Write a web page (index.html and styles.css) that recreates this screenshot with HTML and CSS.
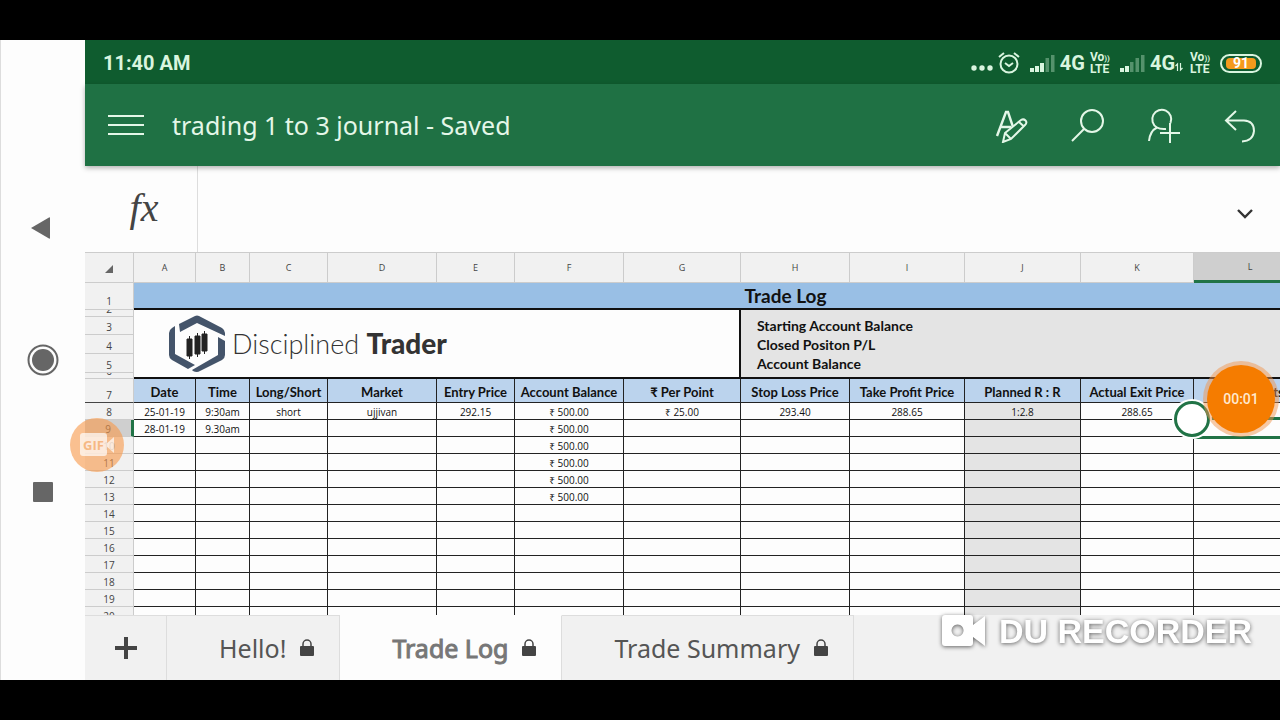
FILE: index.html
```html
<!DOCTYPE html>
<html lang="en">
<head>
  <meta charset="UTF-8" />
  <meta name="viewport" content="width=device-width, initial-scale=1.0"/>
  <title>trading 1 to 3 journal</title>
  <link rel="stylesheet" href="styles.css">
</head>
<body>

  <div class="screen">
    <nav class="android-nav">
      <button aria-label="Back"><svg width="32" height="32" viewBox="0 0 32 32"><path d="M4 16L22 5.500Q23 5 23 6V26Q23 27 22 26.500Z" fill="#666"/></svg></button>
      <button aria-label="Home"><svg width="32" height="32" viewBox="0 0 32 32"><circle cx="16" cy="16" r="14.500" fill="none" stroke="#666" stroke-width="2"/><circle cx="16" cy="16" r="11" fill="#666"/></svg></button>
      <button aria-label="Recent apps"><svg width="32" height="32" viewBox="0 0 32 32"><rect x="6" y="6" width="20" height="20" rx="1" fill="#666"/></svg></button>
    </nav>

    <main class="app">
      <div class="status-bar">
        <span class="clock">11:40 AM</span>
        <div class="status-icons">
          <svg width="22" height="28" viewBox="0 0 22 28" fill="#d9f5df"><circle cx="3" cy="19" r="2.700"/><circle cx="11" cy="19" r="2.700"/><circle cx="19" cy="19" r="2.700"/></svg>
          <svg class="alarm" width="22" height="24" viewBox="0 0 22 24" fill="none" stroke="#d9f5df" stroke-width="2"><circle cx="11" cy="13" r="8.500"/><path d="M7 12l4 3 4-3M1 6l5-4M21 6l-5-4"/></svg>
          <svg class="signal" width="25" height="20" viewBox="0 0 25 20" fill="#d9f5df"><path d="M0 15h4v4H0zM5 13h4v6H5zM10 10h4v9h-4z"/><path d="M15.500 5h3.500v14h-3.500zM21 2h3.500v17H21z" opacity=".35"/></svg>
          <span class="net">4G</span>
          <span class="volte"><span>Vo<small>))</small></span><span>LTE</span></span>
          <svg class="signal" width="25" height="20" viewBox="0 0 25 20" fill="#d9f5df"><path d="M0 15h4v4H0zM5 13h4v6H5z"/><path d="M10 9h3.500v10H10zM15.500 5h3.500v14h-3.500zM21 2h3.500v17H21z" opacity=".35"/></svg>
          <span class="net">4G</span>
          <svg class="updown" width="8" height="10" viewBox="0 0 8 10" fill="none" stroke="#d9f5df" stroke-width="1.200"><path d="M2.500 9V2L.5 4M5.500 1v7l2-2"/></svg>
          <span class="volte"><span>Vo<small>))</small></span><span>LTE</span></span>
          <span class="battery"><span>91</span></span>
        </div>
      </div>

      <header class="app-bar">
        <button aria-label="Menu"><svg width="36" height="24" viewBox="0 0 36 24" stroke="#e4f7e8" stroke-width="2"><path d="M0 3h36M0 12h36M0 21h36"/></svg></button>
        <h1>trading 1 to 3 journal - Saved</h1>
        <div class="actions">
          <button aria-label="Format"><svg width="36" height="36" viewBox="0 0 36 36" fill="none" stroke="#e4f7e8" stroke-width="2"><path d="M3 29L12 5h2L19 20M7 20h10" stroke-width="2.400"/><path d="M9 35l2-9L27 13q2.500-1.500 4.500 0.500t-.5 4.500L17 32zM11 26l6 6M25 15l5 4.500"/></svg></button>
          <button aria-label="Search"><svg width="36" height="36" viewBox="0 0 36 36" fill="none" stroke="#e4f7e8" stroke-width="2"><circle cx="22" cy="14" r="11"/><path d="M14 22L2 34"/></svg></button>
          <button aria-label="Share"><svg width="36" height="36" viewBox="0 0 36 36" fill="none" stroke="#e4f7e8" stroke-width="2"><path d="M24.500 16A9.500 9.500 0 1 0 11 20.500Q14 22.500 20 22M11 20.500Q4 24 3 34"/><path d="M24 16v20M14 26h20"/></svg></button>
          <button aria-label="Undo"><svg width="36" height="36" viewBox="0 0 36 36" fill="none" stroke="#e4f7e8" stroke-width="2"><path d="M14 4L4 13.500 14 23M4 13.500H22Q32 14 32 24 31 34 20 34.500"/></svg></button>
        </div>
      </header>

      <div class="formula-bar">
        <label class="fx" for="formula">fx</label>
        <input type="text" id="formula" class="formula">
        <button class="expand" aria-label="Expand"><svg width="20" height="12" viewBox="0 0 20 12" fill="none" stroke="#333" stroke-width="2.400"><path d="M3 2l7 7 7-7"/></svg></button>
      </div>

      <div class="sheet">
        <table>
          <colgroup>
            <col class="w-head"><col class="w-a"><col class="w-b"><col class="w-c"><col class="w-d"><col class="w-e"><col class="w-f">
            <col class="w-g"><col class="w-h"><col class="w-i"><col class="w-j"><col class="w-k"><col class="w-l"><col class="w-m">
          </colgroup>
          <thead>
            <tr class="letters">
              <th><svg width="8" height="8" viewBox="0 0 8 8"><path d="M8 0v8H0z" fill="#666"/></svg></th>
              <th>A</th><th>B</th><th>C</th><th>D</th><th>E</th><th>F</th><th>G</th><th>H</th><th>I</th><th>J</th><th>K</th><th class="active">L</th><th>M</th>
            </tr>
          </thead>
          <tbody id="rows">
            <tr class="title-row"><th>1</th><td colspan="13">Trade Log</td></tr>
            <tr class="row-2">
              <th><div class="clip">2</div></th>
              <td colspan="7" rowspan="5" class="logo-cell">
                <div class="logo">
                  <svg width="58" height="58" viewBox="0 0 58 58">
                    <g fill="#44546a">
                      <path d="M11 9L27 1Q29 0 31 1L54 13Q57 15 57 18V21L29 8 12 17Z"/>
                      <path d="M7 11V39L27 50 20 54 4 45Q1 43 1 40V18Q1 15 4 13Z"/>
                      <path d="M50 22L57 26V40Q57 43 54 45L32 56Q29 58 25 56L24 55 50 40Z"/>
                    </g>
                    <g fill="#222" stroke="#222"><path d="M19 24h5v17h-5zM27 21h5v18h-5zM34 19h5v17h-5z"/><path d="M21.500 21v23M29.500 18v24M36.500 16v23"/></g>
                  </svg>
                  <span>Disciplined <b>Trader</b></span>
                </div>
              </td>
              <td colspan="6" class="sum"></td>
            </tr>
            <tr class="row-3"><th>3</th><td colspan="6" class="sum">Starting Account Balance</td></tr>
            <tr class="row-4"><th>4</th><td colspan="6" class="sum">Closed Positon P/L</td></tr>
            <tr class="row-4"><th>5</th><td colspan="6" class="sum">Account Balance</td></tr>
            <tr class="row-6"><th><div class="clip">6</div></th><td colspan="6" class="sum"></td></tr>
            <tr class="heads">
              <th>7</th>
              <td>Date</td><td>Time</td><td>Long/Short</td><td>Market</td><td>Entry Price</td><td>Account Balance</td><td>₹ Per Point</td><td>Stop Loss Price</td><td>Take Profit Price</td><td>Planned R : R</td><td>Actual Exit Price</td><td>Total Points</td><td></td>
            </tr>
          </tbody>
        </table>
      </div>

      <footer class="tabs">
        <button class="add" aria-label="Add sheet"><svg width="22" height="22" viewBox="0 0 22 22"><path d="M9 0h4v9h9v4h-9v9H9v-9H0V9h9z" fill="#444"/></svg></button>
        <button class="tab">Hello! <svg width="14" height="18" viewBox="0 0 14 18"><path d="M3 8V5a4 4 0 0 1 8 0v3" fill="none" stroke="#444" stroke-width="1.500"/><rect y="7" width="14" height="10" rx="1" fill="#444"/></svg></button>
        <button class="tab current">Trade Log <svg width="14" height="18" viewBox="0 0 14 18"><path d="M3 8V5a4 4 0 0 1 8 0v3" fill="none" stroke="#444" stroke-width="1.500"/><rect y="7" width="14" height="10" rx="1" fill="#444"/></svg></button>
        <button class="tab">Trade Summary <svg width="14" height="18" viewBox="0 0 14 18"><path d="M3 8V5a4 4 0 0 1 8 0v3" fill="none" stroke="#444" stroke-width="1.500"/><rect y="7" width="14" height="10" rx="1" fill="#444"/></svg></button>
      </footer>
    </main>

    <!-- floating recorder widgets -->
    <button class="gif-bubble"><svg width="34" height="24" viewBox="0 0 34 24" fill="#fff"><rect width="27" height="23" rx="3"/><path d="M25 12l9-8v16z"/></svg><span>GIF</span></button>
    <button class="rec-bubble">00:01</button>
    <div class="watermark">
      <svg width="46" height="36" viewBox="0 0 46 36"><path fill-rule="evenodd" fill="#fff" d="M4 2H29Q32 2 32 5V12L44 3V33L32 24V30Q32 33 29 33H4Q1 33 1 30V5Q1 2 4 2ZM16.500 11.500a6 6 0 1 0 .1 0Z"/></svg>
      <span>DU RECORDER</span>
    </div>
  </div>

  <script>
    const rows = {
      8: ['25-01-19', '9:30am', 'short', 'ujjivan', '292.15', '₹ 500.00', '₹ 25.00', '293.40', '288.65', '1:2.8', '288.65'],
      9: ['28-01-19', '9.30am', '', '', '', '₹ 500.00'],
      10: ['', '', '', '', '', '₹ 500.00'],
      11: ['', '', '', '', '', '₹ 500.00'],
      12: ['', '', '', '', '', '₹ 500.00'],
      13: ['', '', '', '', '', '₹ 500.00']
    };

    const body = document.getElementById('rows');
    for (let n = 8; n <= 20; n++) {
      const data = rows[n] || [];
      let cells = '';
      for (let c = 0; c < 13; c++) {
        const selected = n === 9 && c === 11;
        const cls = selected ? 'selected' : c === 9 ? 'shaded' : '';
        cells += `<td class="${cls}">${data[c] || ''}${selected ? '<i class="handle"></i>' : ''}</td>`;
      }
      body.innerHTML += `<tr class="entry ${n === 9 ? 'active-row' : ''}"><th>${n}</th>${cells}</tr>`;
    }
  </script>

</body>
</html>
```

FILE: styles.css
```css
* {
  box-sizing: border-box;
}
body {
  margin: 0;
  height: 100vh;
  padding: 40px 0;
  background: #000;
  overflow: hidden;
  font-family: "Open Sans", "Noto Sans", sans-serif;
}
button {
  border: none;
  background: none;
  padding: 0;
  font-family: inherit;
  cursor: pointer;
}
svg {
  display: block;
  flex: none;
}
.screen {
  position: relative;
  display: flex;
  height: 100%;
  background: #fdfdfd;
}
.android-nav {
  width: 85px;
  flex: none;
  border-left: 1px solid #ddd;
  display: flex;
  flex-direction: column;
  align-items: center;
  justify-content: center;
  gap: 100px;
}
.app {
  flex: 1;
  min-width: 0;
  display: flex;
  flex-direction: column;
}

/* top bars */
.status-bar {
  height: 44px;
  flex: none;
  display: flex;
  align-items: center;
  justify-content: space-between;
  padding: 2px 18px 0;
  background: #0f5c2f;
  color: #d9f5df;
  font-family: Roboto, sans-serif;
}
.clock {
  font-size: 20px;
  font-weight: bold;
}
.status-icons {
  display: flex;
  align-items: center;
  gap: 5px;
}
.signal {
  margin-left: 5px;
}
.net {
  font-size: 20px;
  font-weight: bold;
  line-height: 24px;
}
.updown {
  margin: 8px 2px 0 -5px;
}
.volte {
  display: flex;
  flex-direction: column;
  font-size: 12px;
  font-weight: bold;
  line-height: 10px;
}
.volte small {
  font-size: 8px;
}
.battery {
  width: 42px;
  height: 19px;
  margin-left: 5px;
  padding: 2px 4px;
  border: 2px solid #d9f5df;
  border-radius: 10px;
}
.battery span {
  display: block;
  border-radius: 4px;
  background: #f59a1c;
  color: #fff;
  font-size: 14px;
  font-weight: bold;
  line-height: 11px;
  text-align: center;
}
.app-bar {
  height: 82px;
  flex: none;
  display: flex;
  align-items: center;
  padding: 0 22px 0 23px;
  background: #1f7144;
  box-shadow: 0 2px 5px rgba(0, 0, 0, 0.3);
  z-index: 1;
}
.app-bar h1 {
  margin: 0 0 0 28px;
  flex: 1;
  color: #e4f7e8;
  font-family: "Noto Sans", sans-serif;
  font-size: 25px;
  font-weight: normal;
}
.actions {
  display: flex;
  gap: 40px;
}
.formula-bar {
  height: 87px;
  flex: none;
  display: flex;
  align-items: center;
  padding-right: 25px;
  border-bottom: 1px solid #ccc;
}
.fx {
  width: 113px;
  padding-left: 6px;
  align-self: stretch;
  border-right: 1px solid #ddd;
  color: #444;
  font-family: "Liberation Serif", serif;
  font-size: 40px;
  font-style: italic;
  line-height: 84px;
  text-align: center;
}
.formula {
  flex: 1;
  height: 60px;
  border: none;
  outline: none;
  background: none;
  font-size: 20px;
}
.expand {
  padding-top: 10px;
}

/* spreadsheet */
.sheet {
  flex: 1;
  min-height: 0;
  overflow: hidden;
}
table {
  width: 1353px;
  table-layout: fixed;
  border-collapse: separate;
  border-spacing: 0;
  color: #111;
  font-size: 10px;
  line-height: 14px;
  text-align: center;
}
.w-head { width: 49px; }
.w-a { width: 62px; }
.w-b { width: 54px; }
.w-c { width: 78px; }
.w-d { width: 109px; }
.w-e { width: 78px; }
.w-f { width: 109px; }
.w-g { width: 117px; }
.w-h { width: 109px; }
.w-i { width: 115px; }
.w-j { width: 116px; }
.w-k { width: 113px; }
.w-l { width: 113px; }
.w-m { width: 131px; }
th,
td {
  padding: 0;
}
th {
  background: #f1f1f1;
  border-right: 1px solid #ccc;
  border-bottom: 1px solid #ccc;
  color: #444;
  font-size: 10px;
  font-weight: normal;
  vertical-align: bottom;
}
td {
  border-right: 1px solid #222;
  border-bottom: 1px solid #222;
}
.letters th {
  height: 30px;
  font-size: 9px;
  vertical-align: middle;
}
.letters svg {
  margin: 2px auto 0;
}
.letters .active {
  background: #cfcfcf;
  border-bottom: 3px solid #217346;
}
.title-row th {
  padding-bottom: 1px;
}
.title-row td {
  height: 27px;
  background: #99bfe5;
  border-bottom: 2px solid #111;
  font-family: Lato, sans-serif;
  font-size: 19px;
  font-weight: bold;
  line-height: 24px;
}
.clip {
  display: flex;
  align-items: flex-end;
  justify-content: center;
  overflow: hidden;
}
.row-2 .clip {
  height: 6px;
}
.row-6 .clip {
  height: 5px;
}
.row-3 th {
  height: 18px;
}
.row-4 th {
  height: 19px;
}
.logo-cell {
  border-right: 2px solid #111;
  border-bottom: 2px solid #111;
}
.logo {
  display: flex;
  align-items: center;
  gap: 6px;
  height: 58px;
  padding-left: 34px;
  color: #333;
  font-family: Lato, sans-serif;
  font-size: 27px;
  font-weight: 300;
}
.logo b {
  font-size: 28px;
  font-weight: 900;
}
.sum {
  padding-left: 16px;
  background: #e4e4e4;
  border-bottom: none;
  font-family: Lato, sans-serif;
  font-size: 14px;
  font-weight: bold;
  text-align: left;
}
.row-6 .sum {
  border-bottom: 2px solid #111;
}
.heads td {
  height: 24px;
  padding-top: 3px;
  background: #bbd3ed;
  font-family: Lato, sans-serif;
  font-size: 13px;
  font-weight: bold;
  white-space: nowrap;
}
.heads th {
  border-bottom-color: #444;
}
.entry th,
.entry td {
  height: 17px;
  padding-top: 2px;
}
.entry .shaded {
  background: #e4e4e4;
}
.active-row th {
  background: #cfcfcf;
  border-right: 3px solid #217346;
}
.selected {
  position: relative;
}
.selected::before {
  content: "";
  position: absolute;
  inset: -3px;
  border: 3px solid #217346;
}
.handle {
  position: absolute;
  top: -19px;
  left: -20px;
  width: 36px;
  height: 36px;
  border: 3px solid #217346;
  border-radius: 50%;
  background: #fff;
  box-shadow: 0 0 0 2px #fff;
}

/* sheet tabs */
.tabs {
  height: 65px;
  flex: none;
  display: flex;
  background: #f1f1f1;
}
.tabs button {
  border-top: 1px solid #ddd;
  border-right: 1px solid #ddd;
}
.add {
  width: 82px;
  display: flex;
  align-items: center;
  justify-content: center;
}
.tab {
  display: flex;
  align-items: center;
  gap: 14px;
  padding: 0 25px 0 52px;
  color: #555;
  font-family: "Noto Sans", sans-serif;
  font-size: 25px;
}
.tabs .current {
  border-top-color: #fdfdfd;
  background: #fdfdfd;
  color: #777;
  -webkit-text-stroke: 1px #777;
}

/* floating widgets */
.gif-bubble {
  position: absolute;
  left: 70px;
  top: 378px;
  width: 54px;
  height: 54px;
  padding-left: 10px;
  border-radius: 50%;
  background: rgba(248, 152, 72, 0.6);
}
.gif-bubble svg {
  opacity: 0.7;
}
.gif-bubble span {
  position: absolute;
  left: 13px;
  top: 19px;
  color: #f6b883;
  font-size: 13px;
  font-weight: bold;
  line-height: 16px;
}
.rec-bubble {
  position: absolute;
  right: 5px;
  top: 325px;
  width: 68px;
  height: 68px;
  border-radius: 50%;
  background: #f57c00;
  box-shadow: 0 0 0 4px rgba(240, 150, 80, 0.5);
  color: #ffe9cf;
  font-family: Roboto, sans-serif;
  font-size: 14px;
  font-weight: 500;
}
.watermark {
  position: absolute;
  right: 28px;
  bottom: 29px;
  display: flex;
  align-items: center;
  gap: 12px;
  color: #fff;
  font-family: "Liberation Sans", sans-serif;
  font-size: 34px;
  font-weight: bold;
  line-height: 40px;
  filter: drop-shadow(0 1px 2px rgba(0, 0, 0, 0.6));
}
```
